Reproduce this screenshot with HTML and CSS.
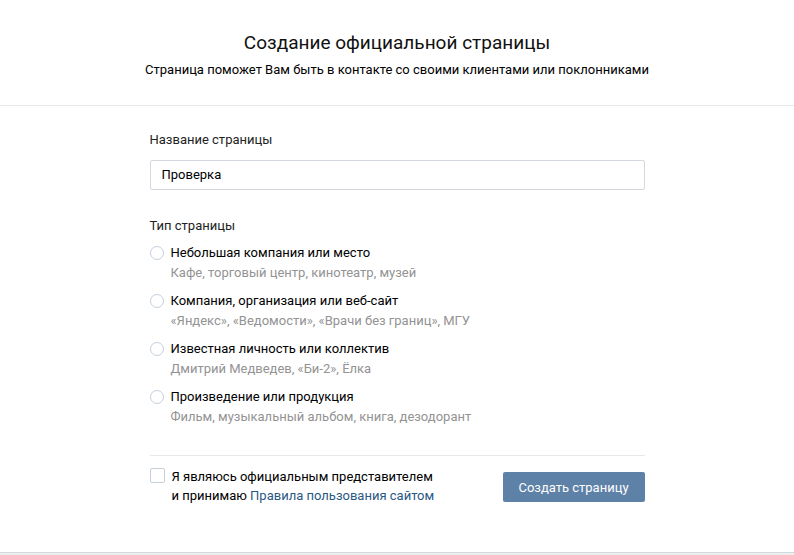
FILE: index.html
```html
<!DOCTYPE html>
<html lang="ru">
<head>
<meta charset="utf-8">
<title>Создание официальной страницы</title>
<link rel="stylesheet" href="styles.css">
</head>
<body>
<div class="card">
  <header class="head">
    <h1 class="title">Создание официальной страницы</h1>
    <p class="subtitle">Страница поможет Вам быть в контакте со своими клиентами или поклонниками</p>
  </header>
  <form class="form">
    <div class="label">Название страницы</div>
    <div class="input">Проверка</div>
    <div class="label label-type">Тип страницы</div>
    <div class="options">
      <div class="option">
        <span class="radio"></span>
        <div class="opt-text">
          <div class="opt-title">Небольшая компания или место</div>
          <div class="opt-hint">Кафе, торговый центр, кинотеатр, музей</div>
        </div>
      </div>
      <div class="option">
        <span class="radio"></span>
        <div class="opt-text">
          <div class="opt-title">Компания, организация или веб-сайт</div>
          <div class="opt-hint">«Яндекс», «Ведомости», «Врачи без границ», МГУ</div>
        </div>
      </div>
      <div class="option">
        <span class="radio"></span>
        <div class="opt-text">
          <div class="opt-title">Известная личность или коллектив</div>
          <div class="opt-hint">Дмитрий Медведев, «Би-2», Ёлка</div>
        </div>
      </div>
      <div class="option">
        <span class="radio"></span>
        <div class="opt-text">
          <div class="opt-title">Произведение или продукция</div>
          <div class="opt-hint">Фильм, музыкальный альбом, книга, дезодорант</div>
        </div>
      </div>
    </div>
    <div class="footer">
      <div class="agree">
        <span class="checkbox"></span>
        <div class="agree-text">Я являюсь официальным представителем<br>и принимаю <a class="link" href="#">Правила пользования сайтом</a></div>
      </div>
      <button class="btn" type="button">Создать страницу</button>
    </div>
  </form>
</div>
</body>
</html>
```
FILE: styles.css
```css
* { box-sizing: border-box; }
html, body { margin: 0; padding: 0; }
body {
  background: #edeef0;
  font-family: Roboto, "Open Sans", "DejaVu Sans", sans-serif;
  font-size: 13px;
  color: #000;
}
.card {
  background: #fff;
  height: 553px;
  border-bottom: 1px solid #d3d9de;
}
.head {
  text-align: center;
  padding: 30px 0 26px;
  border-bottom: 1px solid #e7e8ec;
}
.title {
  margin: 0;
  font-size: 19px;
  font-weight: 400;
  line-height: 26px;
  color: #111;
}
.subtitle {
  margin: 5px 0 0;
  font-size: 13px;
  line-height: 18px;
}
.form {
  width: 495px;
  margin: 0 auto;
  padding-top: 25px;
}
.label {
  line-height: 18px;
  color: #222;
}
.input {
  margin-top: 11px;
  height: 30px;
  border: 1px solid #d3d9de;
  border-radius: 2px;
  padding: 0 11px;
  line-height: 28px;
}
.label-type { margin-top: 27px; }
.options {
  display: flex;
  flex-direction: column;
  gap: 8px;
  margin-top: 8px;
}
.option {
  display: flex;
  gap: 7px;
}
.radio {
  width: 14px;
  height: 14px;
  border: 1px solid #c5d0db;
  border-radius: 50%;
  margin-top: 3px;
  flex: none;
}
.opt-title, .opt-hint { line-height: 20px; }
.opt-hint { color: #939393; }
.footer {
  margin-top: 28px;
  border-top: 1px solid #e7e8ec;
  padding-top: 11px;
  display: flex;
  justify-content: space-between;
  align-items: flex-start;
}
.agree {
  display: flex;
  gap: 7px;
}
.checkbox {
  width: 15px;
  height: 15px;
  border: 1px solid #c5d0db;
  border-radius: 2px;
  margin-top: 1px;
  flex: none;
}
.agree-text { line-height: 19px; }
.link { color: #2a5885; text-decoration: none; }
.btn {
  margin-top: 5px;
  width: 142px;
  height: 30px;
  border: 0;
  border-radius: 2px;
  background: #5e81a8;
  color: #fff;
  font-family: inherit;
  font-size: 13px;
  padding: 0;
}
```
